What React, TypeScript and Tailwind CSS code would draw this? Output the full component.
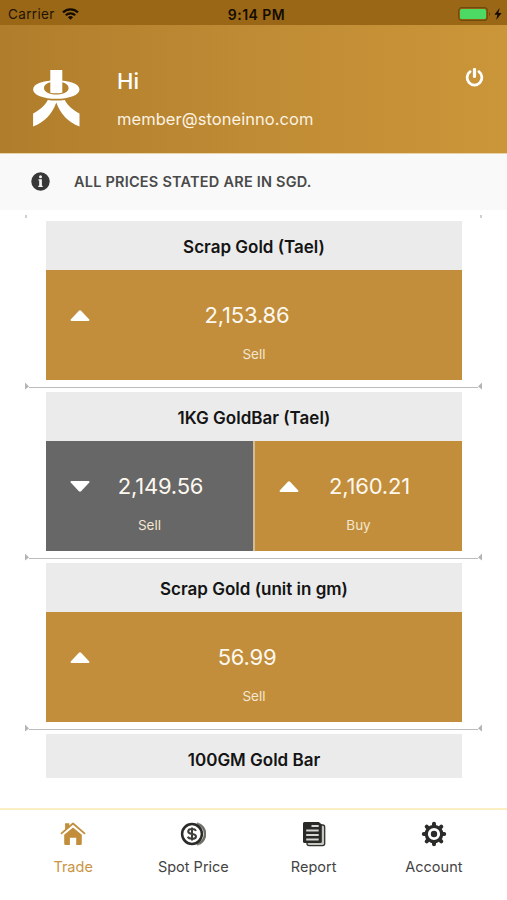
import type { ReactNode } from 'react';

type Quote = {
  price: string;
  label: string;
  direction: 'up' | 'down';
};

const products: { title: string; quotes: Quote[] }[] = [
  {
    title: 'Scrap Gold (Tael)',
    quotes: [{ price: '2,153.86', label: 'Sell', direction: 'up' }],
  },
  {
    title: '1KG GoldBar (Tael)',
    quotes: [
      { price: '2,149.56', label: 'Sell', direction: 'down' },
      { price: '2,160.21', label: 'Buy', direction: 'up' },
    ],
  },
  {
    title: 'Scrap Gold (unit in gm)',
    quotes: [{ price: '56.99', label: 'Sell', direction: 'up' }],
  },
  { title: '100GM Gold Bar', quotes: [] },
];

const StatusBar = () => (
  <div className="grid h-[25px] grid-cols-3 items-center bg-[#996716] pl-2 pr-[5px] text-[13.5px] text-[#1f1403]">
    <div className="flex items-center gap-[7px] pt-[3px] tracking-[0.35px]">
      Carrier
      <svg width="17" height="12" viewBox="0 0 17 12" fill="none" stroke="#140c00" strokeWidth="2.2">
        <path d="M1 4.4a10.8 10.8 0 0 1 15 0" />
        <path d="M3.8 7.3a6.8 6.8 0 0 1 9.4 0" />
        <path d="M8.5 11.8 5.9 9.2a3.8 3.8 0 0 1 5.2 0z" fill="#140c00" stroke="none" />
      </svg>
    </div>
    <div className="pl-[3px] pt-[3px] text-center text-[14px] font-semibold tracking-[0.45px] text-[#140c00]">9:14 PM</div>
    <div className="flex items-center justify-end gap-[3px] pt-[2px]">
      <svg width="33" height="14" viewBox="0 0 33 14">
        <rect x="0.7" y="0.7" width="28.6" height="12.6" rx="3" fill="none" stroke="#704a0c" strokeWidth="1.2" />
        <rect x="2" y="2" width="26" height="10" rx="1.5" fill="#4cd964" />
        <path d="M31 5a2.4 2.4 0 0 1 0 4z" fill="#704a0c" />
      </svg>
      <svg width="8" height="12" viewBox="0 0 8 12" fill="#140c00">
        <path d="M5.6 0 .4 6.8h3L2.2 12l5.400-7H4.4z" />
      </svg>
    </div>
  </div>
);

const Logo = () => (
  <svg width="47" height="57" viewBox="0 0 47 57" className="shrink-0" fill="#fff">
    <path
      fillRule="evenodd"
      d="M23.3 10.2c12.700 0 23.200 3.500 23.200 9.200s-10.500 9.300-23.200 9.300S.1 25.100.1 19.400s10.500-9.200 23.200-9.200zM23.3 11.600c-7 0-12.300 2.500-12.300 6.400s5.300 6.500 12.300 6.500S35.600 21.900 35.600 18s-5.300-6.400-12.300-6.400z"
    />
    <path d="M17.3 0h12v22.800c-3.700.7-8.300.7-12 0z" />
    <path d="M14.800 29.900c5.200.7 11.800.7 17 0 3.200 6.200 8.200 10 14.700 13.500V56.600C35 52 27.500 44 23.300 32.400 19.100 44 11.600 52 .1 56.600V43.400c6.500-3.500 11.500-7.300 14.700-13.500z" />
  </svg>
);

const Header = () => (
  <header className="flex h-[129px] border-b border-[#e9d3a8] bg-linear-to-r from-[#b07d2c] via-[#bf8b34] to-[#cb9639] pl-[33px] pr-[23px] text-white">
    <div className="pt-[45px]">
      <Logo />
    </div>
    <div className="flex-1 pl-[37px] pt-[41px]">
      <h1 className="text-[22px] font-medium leading-[30px]">Hi</h1>
      <p className="mt-3 text-[16.5px] leading-[22px] tracking-[0.05px] text-[#fbf2e2]">member@stoneinno.com</p>
    </div>
    <svg width="19" height="19" viewBox="0 0 19 19" className="mt-[43px]" fill="none" stroke="#fff" strokeLinecap="round">
      <path d="M5.1 3.7a7.4 7.4 0 1 0 8.800 0" strokeWidth="2.8" />
      <path d="M9.5 1.5v7" strokeWidth="3.2" />
    </svg>
  </header>
);

const Notice = () => (
  <div className="flex h-[56px] items-center bg-[#f9f9f9] pb-px pl-[31px]">
    <svg width="19" height="19" viewBox="0 0 19 19">
      <circle cx="9.5" cy="9.5" r="9.2" fill="#373737" />
      <circle cx="9.5" cy="4.7" r="1.5" fill="#f4f4f4" />
      <path d="M7.5 7.3h3.4v6.4h.8v1.3H7.3v-1.3h.9V8.6h-.7z" fill="#f4f4f4" />
    </svg>
    <p className="pl-6 text-[14.5px] font-semibold tracking-[0.22px] text-[#4a4a4a]">ALL PRICES STATED ARE IN SGD.</p>
  </div>
);

const Divider = () => (
  <div className="mx-[25px] flex h-3 items-center text-[#b4b4b4]">
    <svg width="4" height="8" viewBox="0 0 4 8" fill="currentColor">
      <path d="M0 .5 4 4.5 0 7.5z" />
    </svg>
    <div className="mt-[2px] h-px flex-1 bg-[#bcbcbc]" />
    <svg width="4" height="8" viewBox="0 0 4 8" fill="currentColor">
      <path d="M4 .5 0 4.5l4 3z" />
    </svg>
  </div>
);

const Arrow = ({ direction }: { direction: Quote['direction'] }) => (
  <svg width="20" height="11" viewBox="0 0 20 11" fill="#fff">
    {direction === 'up' ? (
      <path d="M.7 9.4 8.9.8q1.1-.9 2.2 0l8.2 8.6q.6 1.400-.8 1.500h-17Q.1 10.800.7 9.400z" />
    ) : (
      <path d="M.7 1.6 8.900 10.200q1.100.9 2.200 0l8.200-8.600Q19.900.2 18.500.1h-17Q.1.2.7 1.600z" />
    )}
  </svg>
);

const QuoteCell = ({ quote, half }: { quote: Quote; half: boolean }) => (
  <div
    className={`flex-1 text-[#fdf8ef] ${quote.direction === 'down' ? 'bg-[#676767]' : 'bg-[#c28e3b]'}`}
  >
    <div className={`grid h-[75px] pt-[30px] ${half ? 'grid-cols-[67px_1fr_45px]' : 'grid-cols-[68px_1fr_82px]'}`}>
      <div className="flex h-[30px] items-center justify-center">
        <Arrow direction={quote.direction} />
      </div>
      <div className="whitespace-nowrap text-center text-[22px] leading-[30px] tracking-[-0.2px]">{quote.price}</div>
    </div>
    <div className="text-center text-[13.5px] leading-[18px] text-[#f3e6d0]">{quote.label}</div>
  </div>
);

const TabIcon = ({ children }: { children: ReactNode }) => (
  <svg width="26" height="26" viewBox="0 0 26 26" fill="none">
    {children}
  </svg>
);

const tabs = [
  {
    label: 'Trade',
    icon: (
      <TabIcon>
        <path d="M5.1 2.3h4.2v3.2L5.1 9z" fill="#c28e3b" />
        <path d="M1.5 12.4 13 2.5l11.5 9.9" stroke="#c28e3b" strokeWidth="1.8" strokeLinecap="round" strokeLinejoin="round" />
        <path d="m4.2 13.8 8.8-7.4 8.8 7.4v8.7q0 1.5-1.5 1.5h-4.1v-7.2H9.9V24H5.7q-1.5 0-1.5-1.5z" fill="#c28e3b" />
      </TabIcon>
    ),
  },
  {
    label: 'Spot Price',
    icon: (
      <TabIcon>
        <path d="M17 2.4a11 11 0 0 1 0 21.2" stroke="#85857e" strokeWidth="2.4" />
        <path d="M19.500 3.5a11 11 0 0 1 0 19" stroke="#6f6f68" strokeWidth="2" />
        <circle cx="12" cy="13" r="9.9" fill="#fff" stroke="#2b2b29" strokeWidth="2.5" />
        <path
          d="M16 9.9c-.6-1.200-2-1.800-4-1.800-2.400 0-3.800.8-3.800 2.400 0 3.600 7.800 1.300 7.800 4.900 0 1.600-1.600 2.400-4 2.400-2.200 0-3.600-.7-4.300-2M12 6.500v13"
          stroke="#3d3d3a"
          strokeWidth="2"
        />
      </TabIcon>
    ),
  },
  {
    label: 'Report',
    icon: (
      <TabIcon>
        <rect x="6" y="4" width="17.7" height="20.6" rx="2" fill="#c6c6c0" stroke="#33332f" strokeWidth="1.3" />
        <path d="M3.5 1h14.3l3 2.5v17q0 1.5-1.5 1.5H3.5Q2 22 2 20.5v-18Q2 1 3.5 1z" fill="#292927" />
        <path d="M10.5 5h7.2M5.2 9.4h12.5M5.2 14h12.5M5.2 18.6h12.5" stroke="#d6d6d1" strokeWidth="2" />
      </TabIcon>
    ),
  },
  {
    label: 'Account',
    icon: (
      <TabIcon>
        <g stroke="#2b2b29" strokeWidth="4" strokeLinecap="round">
          <path d="M13 2.8v20.4M2.8 13h20.4" />
          <path d="m5.700 5.700 14.600 14.600M20.300 5.700 5.700 20.300" />
        </g>
        <circle cx="13" cy="13" r="7.7" fill="#fff" stroke="#2b2b29" strokeWidth="3.2" />
        <circle cx="13" cy="13" r="3.2" fill="#2b2b29" />
      </TabIcon>
    ),
  },
];

const TabBar = () => (
  <nav className="grid h-[92px] grid-cols-4 border-t-2 border-[#fceec3] bg-white px-[13px]">
    {tabs.map((tab) => (
      <div key={tab.label} className="flex flex-col items-center pt-[11px]">
        {tab.icon}
        <span
          className={`mt-[10px] text-[14.5px] leading-5 ${
            tab.label === 'Trade' ? 'text-[#c99544]' : 'text-[#444444]'
          }`}
        >
          {tab.label}
        </span>
      </div>
    ))}
  </nav>
);

const App = () => {
  return (
    <div className="flex h-[900px] w-full flex-col overflow-hidden bg-white font-['Inter',sans-serif]">
      <StatusBar />
      <Header />
      <Notice />
      <main className="h-[568px] overflow-hidden">
        <div className="flex h-[11px] items-center justify-between px-[25px]">
          <div className="mt-[2px] h-[3px] w-[2px] bg-[#cfcfcf]" />
          <div className="mt-[2px] h-[3px] w-[2px] bg-[#cfcfcf]" />
        </div>
        {products.map((product) => (
          <section key={product.title}>
            <div className="ml-[46px] mr-[45px]">
              <h2 className="h-[49px] bg-[#ebebeb] text-center text-[17px] font-semibold leading-[53px] text-[#141414]">
                {product.title}
              </h2>
              {product.quotes.length > 0 && (
                <div className="flex h-[110px] gap-[2px] bg-[#d3bd95]">
                  {product.quotes.map((quote) => (
                    <QuoteCell key={quote.label} quote={quote} half={product.quotes.length > 1} />
                  ))}
                </div>
              )}
            </div>
            {product.quotes.length > 0 && <Divider />}
          </section>
        ))}
      </main>
      <div className="flex-1" />
      <TabBar />
    </div>
  );
};

export default App;
